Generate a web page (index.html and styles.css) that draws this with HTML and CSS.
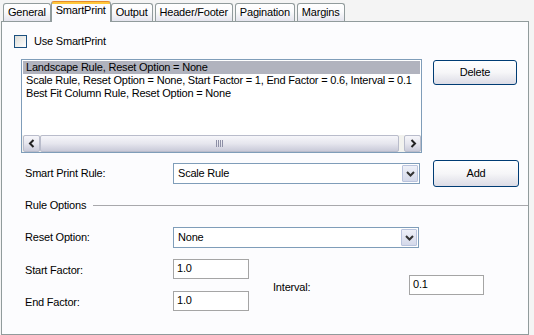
FILE: index.html
```html
<!DOCTYPE html>
<html>
<head>
   <title>Print Settings - SmartPrint</title>
   <link rel="stylesheet" href="styles.css">
</head>
<body>
<div class="dialog">
   <div class="tabs">
      <div class="tab">General</div>
      <div class="tab active">SmartPrint</div>
      <div class="tab">Output</div>
      <div class="tab">Header/Footer</div>
      <div class="tab">Pagination</div>
      <div class="tab">Margins</div>
   </div>

   <div class="panel">
      <label class="check-row"><span class="checkbox"></span>Use SmartPrint</label>

      <div class="list-row">
         <div class="listbox">
            <div class="list-items">
               <div class="item selected">Landscape Rule, Reset Option = None</div>
               <div class="item">Scale Rule, Reset Option = None, Start Factor = 1, End Factor = 0.6, Interval = 0.1</div>
               <div class="item">Best Fit Column Rule, Reset Option = None</div>
            </div>
            <div class="hscroll">
               <span class="sb-btn"><svg width="8" height="9" viewBox="0 0 8 9"><polyline points="5.5,1 2,4.5 5.5,8" fill="none" stroke="#222" stroke-width="2"/></svg></span>
               <span class="sb-thumb"><svg width="8" height="7" viewBox="0 0 8 7"><path d="M0.5 0V7M2.5 0V7M4.5 0V7M6.5 0V7" stroke="#8d8fa6" stroke-width="1"/></svg></span>
               <span class="sb-btn sb-right"><svg width="8" height="9" viewBox="0 0 8 9"><polyline points="2.5,1 6,4.5 2.5,8" fill="none" stroke="#222" stroke-width="2"/></svg></span>
            </div>
         </div>
         <button class="btn btn-delete">Delete</button>
      </div>

      <div class="rule-row">
         <span class="label">Smart Print Rule:</span>
         <div class="combo combo-rule">
            <span class="combo-text">Scale Rule</span>
            <span class="combo-btn"><svg width="9" height="6" viewBox="0 0 9 6"><polyline points="1,1 4.5,4.5 8,1" fill="none" stroke="#333" stroke-width="2"/></svg></span>
         </div>
         <button class="btn btn-add">Add</button>
      </div>

      <div class="group-title">
         <span>Rule Options</span>
         <span class="group-line"></span>
      </div>

      <div class="reset-row">
         <span class="label">Reset Option:</span>
         <div class="combo combo-reset">
            <span class="combo-text">None</span>
            <span class="combo-btn"><svg width="9" height="6" viewBox="0 0 9 6"><polyline points="1,1 4.5,4.5 8,1" fill="none" stroke="#333" stroke-width="2"/></svg></span>
         </div>
      </div>

      <div class="factors">
         <span class="label">Start Factor:</span>
         <div class="textbox">1.0</div>
         <span class="label interval-label">Interval:</span>
         <div class="textbox interval-box">0.1</div>
         <span class="label">End Factor:</span>
         <div class="textbox">1.0</div>
      </div>
   </div>
</div>
</body>
</html>
```

FILE: styles.css
```css
* { margin: 0; padding: 0; box-sizing: border-box; }
html, body { width: 534px; height: 335px; overflow: hidden; }
body { background: #f4f4f4; font: 11px/13px "Liberation Sans", Arial, sans-serif; letter-spacing: -0.2px; color: #000; }

/* tab strip */
.tabs { display: flex; align-items: flex-end; gap: 2px; height: 21px; padding-left: 3px; }
.tab {
   height: 18px;
   padding: 0 4px 1px;
   display: flex; align-items: center; justify-content: center;
   border: 1px solid #919b9c; border-bottom: none;
   border-radius: 3px 3px 0 0;
   background: linear-gradient(#ffffff, #fbfbfc 45%, #e4e4ee);
}
.tab.active {
   position: relative; z-index: 1;
   height: 21px; margin: 0 -2px -1px; padding: 0 4px 3px;
   border-top: 1px solid #e68b2c;
   background: linear-gradient(#ffc83c, #ffc83c) top / 100% 2px no-repeat, #fcfcfe;
}

/* page body */
.panel {
   width: 528px; height: 314px; margin-left: 1px;
   border: 1px solid #919b9c;
   background: #fcfcfe;
}

.check-row { display: flex; align-items: center; gap: 7px; height: 13px; margin: 13px 0 0 12px; }
.checkbox {
   width: 13px; height: 13px;
   border: 1px solid #1c5180;
   background: linear-gradient(135deg, #dcdcd7, #ffffff);
}

.list-row { display: flex; align-items: flex-start; margin: 11px 0 0 19px; }
.listbox {
   width: 401px; height: 94px;
   display: flex; flex-direction: column;
   border: 1px solid #7f9db9; background: #fff;
}
.list-items { flex: 1; padding-top: 1px; }
.item { height: 13px; margin: 0 1px; padding-left: 3px; white-space: nowrap; overflow: hidden; }
.item.selected { background: #b1b3be; }

.hscroll { display: flex; height: 17px; padding-left: 1px; background: #f2f2ee; }
.sb-btn, .sb-thumb {
   display: flex; align-items: center; justify-content: center;
   border: 1px solid #b9bccb; border-radius: 2px;
   background: linear-gradient(#f6f6fa, #e6e6ee 50%, #c9cad9);
}
.sb-btn { width: 17px; }
.sb-thumb { width: 359px; }
.sb-right { margin-left: auto; width: 17px; }

.btn {
   border: 1px solid #003c74; border-radius: 3px;
   background: linear-gradient(#ffffff, #f6f6f8 50%, #dcdce6);
   font: inherit; font-weight: normal; letter-spacing: inherit; color: #000;
}
.btn-delete { width: 84px; height: 25px; margin: 1px 0 0 11px; }
.btn-add { width: 86px; height: 27px; margin-left: 13px; }

.label { width: 148px; margin-left: 23px; }

.rule-row { display: flex; align-items: center; height: 27px; margin-top: 7px; }
.reset-row { display: flex; align-items: center; height: 21px; margin-top: 15px; }

.combo {
   display: flex; height: 21px; padding: 1px;
   border: 1px solid #7f9db9; background: #fff;
}
.combo-rule { width: 247px; }
.combo-reset { width: 246px; }
.combo-text { flex: 1; padding-left: 3px; line-height: 17px; }
.combo-btn {
   width: 16px;
   display: flex; align-items: center; justify-content: center;
   border: 1px solid #b9c3dd; border-radius: 1px;
   background: linear-gradient(#eef0f8, #d4d9ea);
}

.group-title { display: flex; align-items: center; height: 13px; margin: 12px 0 0 23px; }
.group-line { flex: 1; margin-left: 7px; border-top: 1px solid #a8a8ac; }

.factors {
   display: grid;
   grid-template-columns: 171px 76px 160px 75px;
   grid-template-rows: 20px 20px;
   row-gap: 12px;
   margin-top: 11px;
}
.factors .label { padding-top: 5px; }
.textbox {
   height: 20px; padding: 2px 0 0 3px;
   border: 1px solid #a5a5a5; background: #fff;
}
.interval-label { grid-column: 3; grid-row: 1 / span 2; align-self: center; margin-left: 24px; width: auto; }
.interval-box { grid-column: 4; grid-row: 1 / span 2; align-self: center; }
```
